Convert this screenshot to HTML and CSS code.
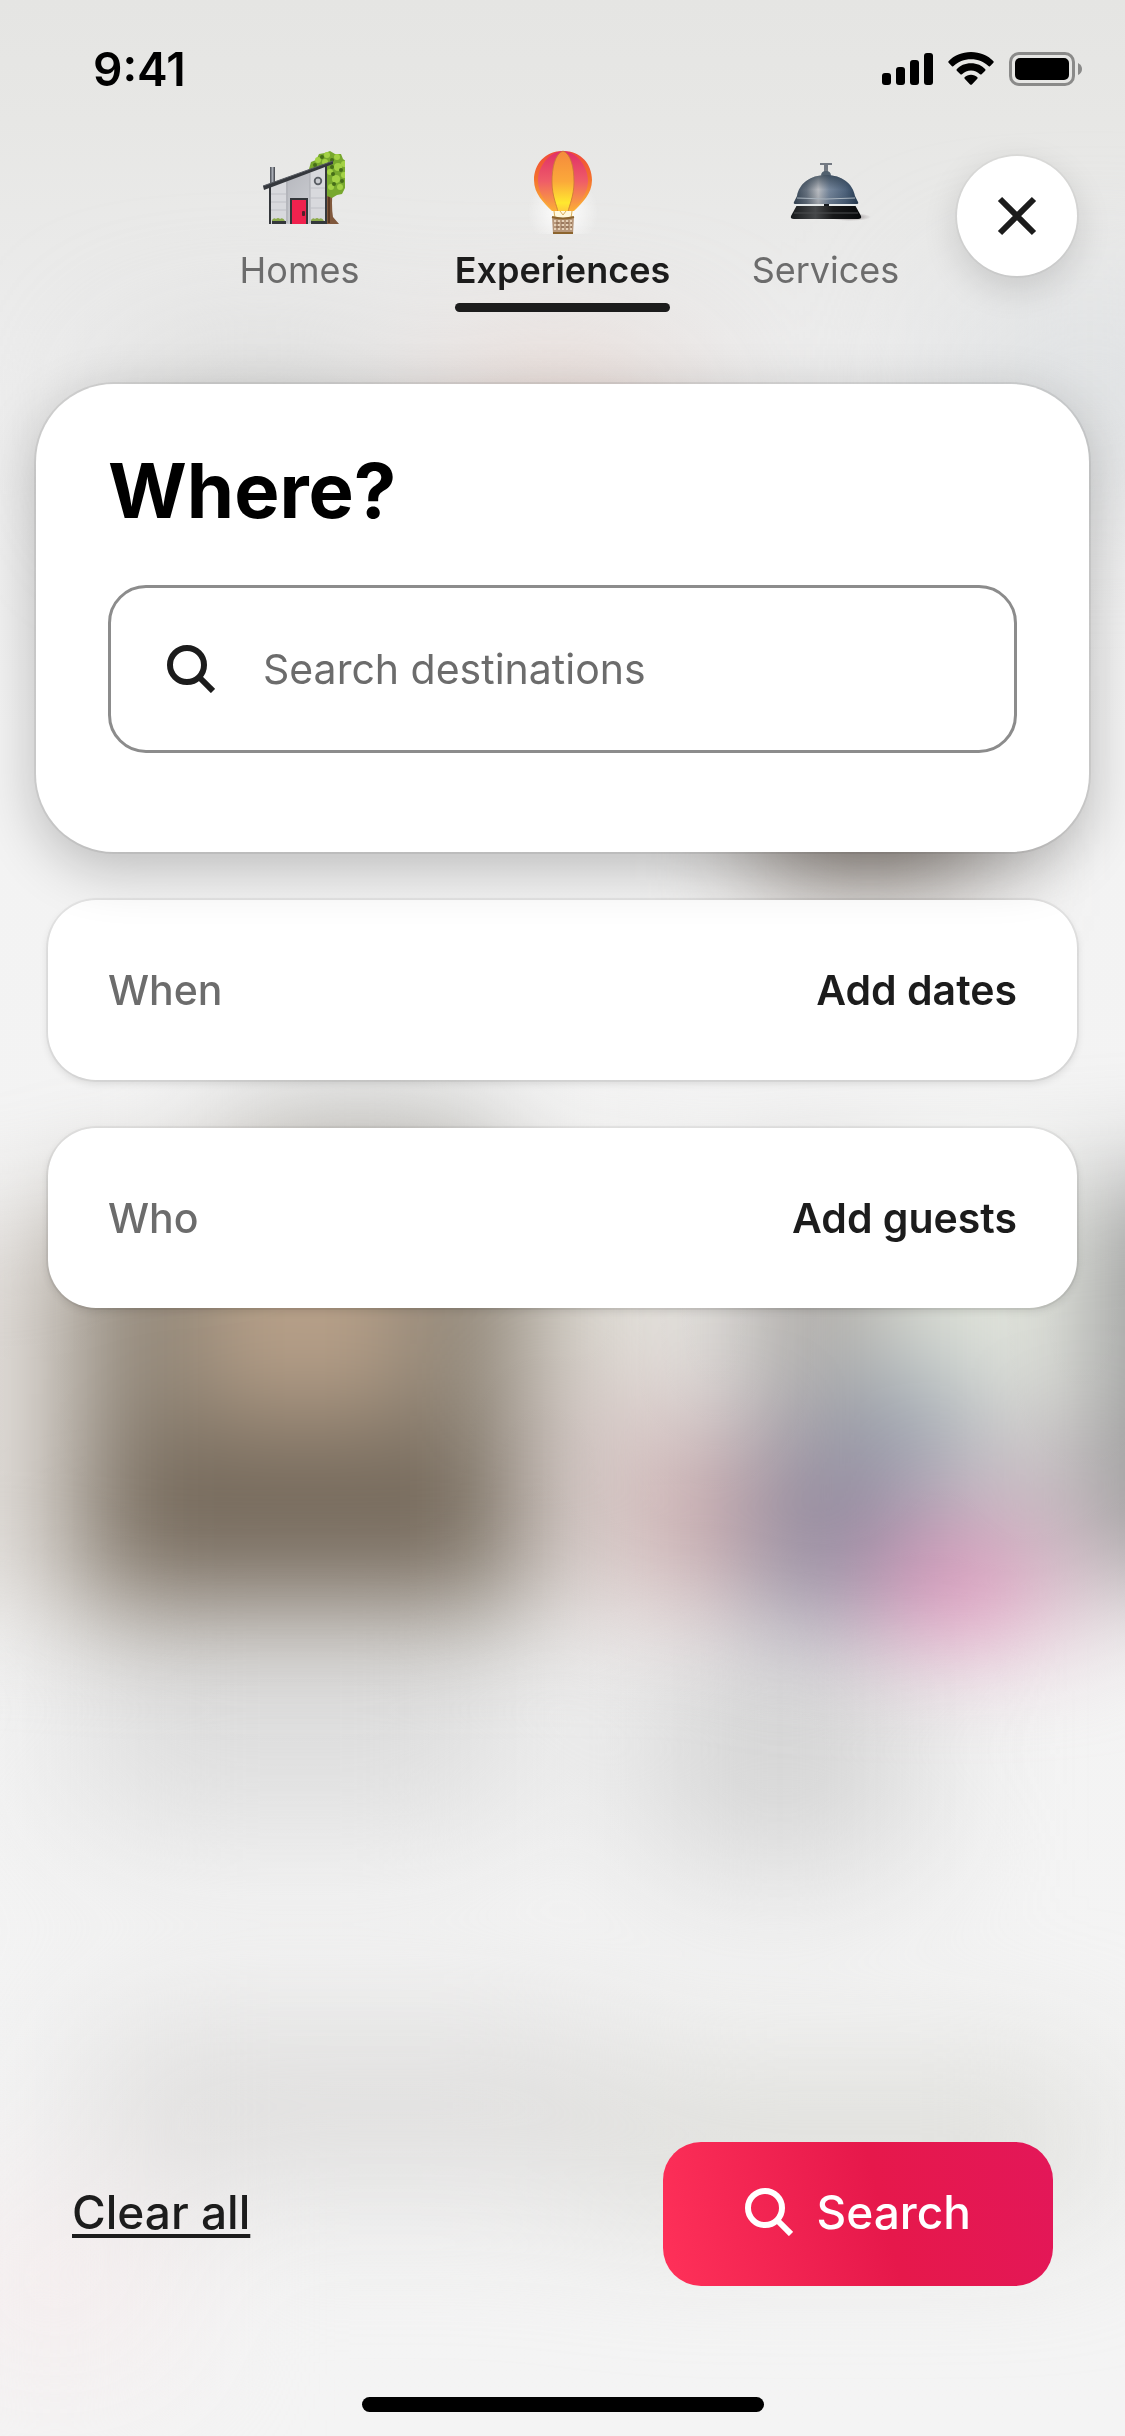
FILE: index.html
```html
<!DOCTYPE html>
<html lang="en">
<head>
<meta charset="utf-8">
<meta name="viewport" content="width=device-width, initial-scale=1">
<title>Search experiences</title>
<link rel="stylesheet" href="styles.css">
</head>
<body>
<svg class="backdrop" viewBox="0 0 1125 2436" preserveAspectRatio="none" aria-hidden="true">
  <defs>
    <linearGradient id="base" x1="0" y1="0" x2="0" y2="1">
      <stop offset="0" stop-color="#e5e5e3"/>
      <stop offset=".05" stop-color="#e7e7e5"/>
      <stop offset=".14" stop-color="#ececec"/>
      <stop offset=".3" stop-color="#f3f3f3"/>
      <stop offset="1" stop-color="#f4f4f4"/>
    </linearGradient>
    <filter id="soft" color-interpolation-filters="sRGB" filterUnits="userSpaceOnUse" x="-300" y="-300" width="1725" height="3036"><feGaussianBlur stdDeviation="54"/></filter>
    <filter id="wide" color-interpolation-filters="sRGB" filterUnits="userSpaceOnUse" x="-300" y="-300" width="1725" height="3036"><feGaussianBlur stdDeviation="75"/></filter>
  </defs>
  <rect width="1125" height="2436" fill="url(#base)"/>
  <g filter="url(#wide)">
    <rect x="130" y="370" width="260" height="120" fill="#d2d2d0"/>
    <rect x="450" y="380" width="220" height="110" fill="#e4cbc2"/>
    <rect x="960" y="310" width="260" height="160" fill="#dcdfe1"/>
    <rect x="80" y="1600" width="440" height="220" fill="#dbdbdb"/>
    <rect x="650" y="1640" width="260" height="220" fill="#d2d2d2"/>
    <rect x="90" y="2030" width="520" height="150" fill="#dcdbda"/>
    <rect x="600" y="2080" width="500" height="120" fill="#d8d8d3"/>
    <rect x="-60" y="2200" width="230" height="170" fill="#f5edee"/>
  </g>
  <g filter="url(#soft)">
    <rect x="760" y="640" width="220" height="240" fill="#857b73"/>
    <rect x="230" y="1110" width="260" height="100" fill="#b9b9b6"/>
    <rect x="-90" y="1230" width="150" height="370" fill="#dfdbd7"/>
    <rect x="70" y="1200" width="460" height="410" fill="#8f8577"/>
    <rect x="210" y="1200" width="190" height="210" fill="#b9a189"/>
    <rect x="110" y="1430" width="390" height="175" fill="#766a5c"/>
    <rect x="530" y="1190" width="160" height="190" fill="#dfdcd5"/>
    <rect x="560" y="1380" width="130" height="230" fill="#d3c4c2"/>
    <rect x="740" y="1190" width="140" height="270" fill="#aeaaa6"/>
    <rect x="880" y="1190" width="190" height="240" fill="#e0e3da"/>
    <rect x="1095" y="1180" width="200" height="400" fill="#979897"/>
    <rect x="820" y="1370" width="150" height="130" fill="#9ba9b3"/>
    <rect x="750" y="1430" width="170" height="200" fill="#938da0"/>
    <rect x="670" y="1440" width="80" height="160" fill="#cba7aa"/>
    <rect x="960" y="1430" width="130" height="170" fill="#c6bcc2"/>
    <rect x="880" y="1540" width="140" height="95" fill="#da84b2"/>
    <rect x="1020" y="1540" width="90" height="90" fill="#dec3cf"/>
  </g>
</svg>

<div class="statusbar">
  <time class="clock">9:41</time>
  <div class="status-icons">
    <svg width="51" height="34" viewBox="0 0 51 34" aria-hidden="true"><rect y="21" width="9" height="12" rx="3"/><rect x="14" y="15" width="9" height="18" rx="3"/><rect x="28" y="8" width="9" height="25" rx="3"/><rect x="42" y="1" width="9" height="32" rx="3"/></svg>
    <svg width="46" height="34" viewBox="0 0 46 34" aria-hidden="true"><path d="M23 0C32 0 40 3.500 45.500 9.200Q46 10 45.400 10.700L42 14.200Q41.200 14.900 40.400 14.100C36 9.800 30 7.200 23 7.200S10 9.800 5.600 14.100Q4.800 14.900 4 14.200L.6 10.700Q0 10 .5 9.200C6 3.500 14 0 23 0Z"/><path d="M23 11.200C29 11.200 34 13.500 37.300 17.200Q37.800 18 37.200 18.700L33.600 22.300Q32.800 22.900 32 22.200C29.600 19.900 26.500 18.500 23 18.500S16.400 19.900 14 22.200Q13.200 22.900 12.400 22.300L8.800 18.700Q8.200 18 8.700 17.200C12 13.500 17 11.200 23 11.200Z"/><path d="M23 22.800C25.600 22.800 27.800 23.700 29.400 25.300Q30 26 29.300 26.700L23.900 32.400Q23 33.200 22.100 32.400L16.700 26.700Q16 26 16.600 25.300C18.200 23.700 20.400 22.800 23 22.800Z"/></svg>
    <svg width="74" height="34" viewBox="0 0 74 34" aria-hidden="true"><rect x="1.500" y="1.500" width="63" height="31" rx="8.500" fill="none" stroke="#8a8a89" stroke-width="3"/><rect x="6" y="6" width="54" height="22" rx="5"/><path d="M69 11Q73 13 73 17T69 23Z" fill="#8a8a89"/></svg>
  </div>
</div>

<header class="header">
  <nav class="tabs" aria-label="Category">
    <a class="tab" href="#homes">
      <svg class="tab-icon" viewBox="-8 0 90 84" aria-hidden="true">
        <defs>
          <linearGradient id="wall" x1="0" y1="0" x2="1" y2="1"><stop offset="0" stop-color="#aeb0b6"/><stop offset="1" stop-color="#d4d5da"/></linearGradient>
          <linearGradient id="flue"><stop offset="0" stop-color="#474b52"/><stop offset=".5" stop-color="#a8acb4"/><stop offset="1" stop-color="#3a3d43"/></linearGradient>
        </defs>
        <path d="M64 34h6q-2 22 0 33l6 7H63Z" fill="#80583c"/><path d="M66 40v33" stroke="#5a3824" stroke-width="2"/>
        <path d="M46 19l2-7 5-2 3-6 6-1 5-2 5 3 6 0 2 5 4 3 0 6 1 5-2 5 2 6-3 4-3 6-5 1-5 3-5-2-5 1-4-4-8-12Z" fill="#78a82e"/>
        <g fill="#a3d145"><circle cx="55" cy="10" r="3"/><circle cx="64" cy="5" r="3"/><circle cx="74" cy="7" r="3"/><circle cx="81" cy="14" r="3"/><circle cx="75" cy="17" r="4"/><circle cx="81" cy="25" r="3"/><circle cx="73" cy="29" r="4"/><circle cx="77" cy="37" r="3"/><circle cx="68" cy="37" r="3"/><circle cx="67" cy="22" r="3"/><circle cx="62" cy="12" r="3"/></g>
        <g fill="#466d18"><circle cx="59" cy="7" r="2"/><circle cx="69" cy="10" r="2"/><circle cx="78" cy="20" r="2"/><circle cx="70" cy="24" r="2"/><circle cx="79" cy="31" r="2"/><circle cx="71" cy="34" r="2"/><circle cx="52" cy="15" r="2"/><circle cx="69" cy="17" r="2"/></g>
        <rect x="7" y="17" width="5" height="20" fill="url(#flue)"/>
        <path d="M7 36L63 15V74H7Z" fill="url(#wall)"/>
        <path d="M8 36l15-6v44H8ZM47 22l15-6v58H47Z" fill="#d8d9dd"/>
        <path d="M24 31v42M47 23v50" stroke="#aaacb2"/>
        <path d="M8 44h15M8 52h15M8 60h15M47 38h15M47 48h15M47 58h15" stroke="#bfc0c6"/>
        <path d="M7 35V74M63 15V74" stroke="#34373b" stroke-width="2"/>
        <path d="M0 36L70 11v3L1 40Z" fill="#35383d"/>
        <path d="M0 36L70 11" stroke="#565a61"/>
        <rect x="27" y="48" width="18" height="26" fill="#33363a"/><rect x="29" y="50" width="14" height="24" fill="#f0224e"/>
        <rect x="39" y="61" width="3" height="5" rx="1" fill="#53202b"/><circle cx="55" cy="31" r="3.300" fill="#c9cbd0" stroke="#5a5e64" stroke-width="1.800"/>
        <path d="M9 71h14v3H9ZM48 71h14v3H48Z" fill="#34383b"/><path d="M9 70q2-3 4-1 2-2 4 0 3-2 5 2H9ZM48 70q2-3 4-1 2-2 4 0 3-2 5 2H48Z" fill="#8cab4c"/>
      </svg>
      <span class="tab-label">Homes</span>
    </a>
    <a class="tab tab-active" href="#experiences" aria-current="page">
      <svg class="tab-icon" viewBox="0 0 90 84" aria-hidden="true">
        <defs>
          <radialGradient id="halo"><stop offset="0" stop-color="#fff"/><stop offset="1" stop-color="#fff" stop-opacity="0"/></radialGradient>
          <linearGradient id="outer" x1="0" y1="0" x2="0" y2="1"><stop offset="0" stop-color="#f04a3a"/><stop offset=".45" stop-color="#f4702c"/><stop offset="1" stop-color="#fbb43c"/></linearGradient>
          <linearGradient id="panel" x1="0" y1="0" x2="0" y2="1"><stop offset="0" stop-color="#e02f66"/><stop offset=".5" stop-color="#ef5c68"/><stop offset="1" stop-color="#fcae35"/></linearGradient>
          <linearGradient id="glow" x1="0" y1="0" x2="0" y2="1"><stop offset="0" stop-color="#f58a3c"/><stop offset=".5" stop-color="#fba93a"/><stop offset=".85" stop-color="#ffe82f"/><stop offset="1" stop-color="#ffc93d"/></linearGradient>
        </defs>
        <circle cx="45" cy="62" r="36" fill="url(#halo)"/>
        <path d="M45 1C63 1 74 14 74 30C74 44 64 53 56 61H34C26 53 16 44 16 30C16 14 27 1 45 1Z" fill="url(#outer)"/>
        <path d="M45 1C57 1 70 15 70 31C70 45 60 54 55 61H35C30 54 20 45 20 31C20 15 33 1 45 1Z" fill="url(#panel)"/>
        <path d="M45 1C53 4 56 18 56 32C56 46 51 56 50 62H40C39 56 34 46 34 32C34 18 37 4 45 1Z" fill="url(#glow)" stroke="#c87a35" stroke-width=".8"/>
        <path d="M35 61h20v7H35Z" fill="#fff8dc"/><path d="M36 61l1 7M54 61l-1 7M42 61l3 4 3-4" fill="none" stroke="#d9ad60"/>
        <path d="M34 67q11 3 22 0l-1 17H35Z" fill="#b7977a"/>
        <path d="M36 71h18M36 75h18M36 79h18" stroke="#e5d0b7" stroke-width="2" stroke-dasharray="2 2"/><path d="M38 73h16M38 77h16" stroke="#805d45" stroke-dasharray="3 2"/>
        <path d="M34 67q11 3 22 0M35 83h20" fill="none" stroke="#8c642e" stroke-width="2"/>
      </svg>
      <span class="tab-label">Experiences</span>
    </a>
    <a class="tab" href="#services">
      <svg class="tab-icon" viewBox="-8 0 90 84" aria-hidden="true">
        <defs>
          <linearGradient id="dome"><stop offset="0" stop-color="#344353"/><stop offset=".2" stop-color="#66717e"/><stop offset=".38" stop-color="#b9bcc1"/><stop offset=".55" stop-color="#75869b"/><stop offset=".8" stop-color="#4e637c"/><stop offset="1" stop-color="#263a51"/></linearGradient>
          <linearGradient id="shade" x1="0" y1="0" x2="0" y2="1"><stop offset="0" stop-color="#263645" stop-opacity=".7"/><stop offset=".5" stop-color="#263645" stop-opacity="0"/><stop offset="1" stop-color="#1d2835" stop-opacity=".2"/></linearGradient>
          <linearGradient id="foot"><stop offset="0" stop-color="#17191b"/><stop offset=".35" stop-color="#454749"/><stop offset=".6" stop-color="#171819"/><stop offset="1" stop-color="#07090b"/></linearGradient>
          <radialGradient id="cast"><stop offset="0" stop-color="#5d5055" stop-opacity=".7"/><stop offset="1" stop-color="#5d5055" stop-opacity="0"/></radialGradient>
        </defs>
        <ellipse cx="61" cy="67" rx="21" ry="4" fill="url(#cast)"/>
        <path d="M31 13h12v2H39v8H35V15H31Z" fill="#737982"/><path d="M32 26q0-5 5-5t5 5Z" fill="#52616f"/>
        <path d="M8 55h58l6 11q1 3-3 3H5q-4 0-3-3Z" fill="url(#foot)"/><path d="M5 63h64" stroke="#4c4e51"/>
        <path d="M5 52l3-6C10 34 21 25 37 25S64 34 66 46l3 6q1 2-2 2H7q-3 0-2-2Z" fill="url(#dome)"/>
        <path d="M5 52l3-6C10 34 21 25 37 25S64 34 66 46l3 6q1 2-2 2H7q-3 0-2-2Z" fill="url(#shade)"/>
        <path d="M8 48q29 2 58 0" fill="none" stroke="#a9b4be"/><path d="M6 55h62" stroke="#e6eaea" stroke-width="2"/><path d="M35 54h5v2h-5Z" fill="#161a1e"/>
      </svg>
      <span class="tab-label">Services</span>
    </a>
  </nav>
  <button class="close" type="button" aria-label="Close"><svg width="40" height="40" viewBox="0 0 40 40" aria-hidden="true"><path d="M3 3L37 37M37 3L3 37" stroke="#1c1c1c" stroke-width="6"/></svg></button>
</header>

<main class="panels">
  <section class="where">
    <h1 class="title">Where?</h1>
    <label class="field">
      <svg class="search-icon" viewBox="0 0 48 48" aria-hidden="true"><circle cx="20" cy="20" r="17"/><path d="M31 31L46 46"/></svg>
      <input class="field-input" type="text" placeholder="Search destinations" aria-label="Search destinations">
    </label>
  </section>
  <button class="row" type="button"><span class="row-name">When</span><span class="row-value">Add dates</span></button>
  <button class="row" type="button"><span class="row-name">Who</span><span class="row-value">Add guests</span></button>
</main>

<footer class="footer">
  <button class="clear" type="button">Clear all</button>
  <button class="search" type="button"><svg class="search-icon" viewBox="0 0 48 48" aria-hidden="true"><circle cx="20" cy="20" r="17"/><path d="M31 31L46 46"/></svg>Search</button>
</footer>
<div class="home-indicator"></div>
</body>
</html>
```
FILE: styles.css
```css
* {
  box-sizing: border-box;
}

body {
  margin: 0;
  min-height: 100vh;
  display: flex;
  flex-direction: column;
  font-family: Inter, "Liberation Sans", sans-serif;
  color: #1c1c1c;
  background: #f3f3f3;
}

button,
input {
  font: inherit;
  color: inherit;
  border: 0;
  padding: 0;
  background: none;
}

.backdrop {
  position: fixed;
  inset: 0;
  z-index: -1;
  width: 100%;
  height: 100%;
}

.statusbar {
  height: 138px;
  padding: 0 42px 0 93px;
  display: flex;
  align-items: center;
  justify-content: space-between;
  color: #000;
}

.clock {
  font-size: 46px;
  line-height: 48px;
  font-weight: 600;
}

.status-icons {
  display: flex;
  gap: 15px;
}

.header {
  padding: 12px 48px 0;
  display: grid;
  grid-template-columns: 1fr 120px;
  align-items: start;
}

.tabs {
  margin-left: 120px;
  display: grid;
  grid-template-columns: repeat(3, 1fr);
  justify-items: center;
}

.tab {
  display: flex;
  flex-direction: column;
  align-items: center;
  color: #6c6c6c;
  text-decoration: none;
}

.tab-icon {
  width: 90px;
  height: 84px;
}

.tab-label {
  margin-top: 14px;
  font-size: 36px;
  line-height: 44px;
}

.tab-active {
  color: #1c1c1c;
  font-weight: 600;
}

.tab-active::after {
  content: "";
  align-self: stretch;
  height: 9px;
  margin-top: 11px;
  border-radius: 5px;
  background: #1c1c1c;
}

.close {
  width: 120px;
  height: 120px;
  margin-top: 6px;
  display: grid;
  place-items: center;
  border-radius: 50%;
  background: #fff;
  box-shadow: 0 0 0 2px rgba(0, 0, 0, .04), 0 12px 36px rgba(0, 0, 0, .14);
}

.panels {
  margin-top: 72px;
  padding: 0 36px;
  display: flex;
  flex-direction: column;
  gap: 48px;
}

.where {
  position: relative;
  z-index: 1;
  padding: 68px 72px 99px;
  border-radius: 78px;
  background: #fff;
  box-shadow: 0 0 0 2px rgba(0, 0, 0, .07), 0 16px 56px rgba(0, 0, 0, .24);
}

.title {
  margin: 0;
  font-size: 76px;
  line-height: 76px;
  font-weight: 700;
  color: #000;
}

.field {
  margin-top: 57px;
  height: 168px;
  padding: 0 56px;
  display: flex;
  align-items: center;
  gap: 48px;
  border: 3px solid #8c8c8c;
  border-radius: 38px;
}

.field-input {
  flex: 1;
  min-width: 0;
  font-size: 41px;
  line-height: 48px;
  outline: 0;
}

.field-input::placeholder {
  color: #6c6c6c;
  opacity: 1;
}

.search-icon {
  width: 48px;
  height: 48px;
  fill: none;
  stroke: currentColor;
  stroke-width: 6px;
}

.row {
  height: 180px;
  margin: 0 12px;
  padding: 0 60px;
  display: flex;
  align-items: center;
  justify-content: space-between;
  border-radius: 48px;
  font-size: 41px;
  line-height: 48px;
  font-weight: 500;
  background: #fff;
  box-shadow: 0 0 0 2px rgba(0, 0, 0, .05), 0 3px 8px rgba(0, 0, 0, .12);
}

.row-name {
  color: #6c6c6c;
}

.row-value {
  font-weight: 600;
}

.footer {
  margin-top: auto;
  padding: 0 72px;
  display: flex;
  align-items: center;
  justify-content: space-between;
  font-size: 46px;
  line-height: 56px;
  font-weight: 500;
}

.clear {
  padding-bottom: 4px;
  text-decoration: underline;
  text-decoration-thickness: 4px;
  text-underline-offset: 5px;
  text-decoration-skip-ink: none;
}

.search {
  height: 144px;
  padding: 0 82px 4px;
  display: flex;
  align-items: center;
  gap: 24px;
  border-radius: 38px;
  color: #fff;
  background: linear-gradient(75deg, #ff3159, #e6184b 56%, #e31759);
}

.home-indicator {
  width: 402px;
  height: 15px;
  margin: 111px auto 24px;
  border-radius: 8px;
  background: #000;
}
```
